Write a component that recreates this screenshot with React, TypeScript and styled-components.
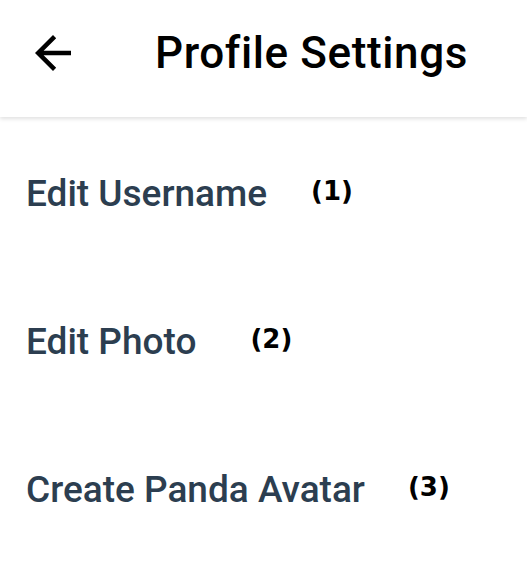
import React from "react";
import styled, { createGlobalStyle } from "styled-components";

const GlobalStyle = createGlobalStyle`
  html, body {
    margin: 0;
    padding: 0;
    background: #ffffff;
  }
  body {
    font-family: Roboto, "Noto Sans", sans-serif;
  }
`;

const Screen = styled.div`
  width: 527px;
  min-height: 582px;
  background: #ffffff;
  display: flex;
  flex-direction: column;
`;

const Header = styled.header`
  height: 117px;
  box-sizing: border-box;
  display: flex;
  align-items: center;
  padding: 0 0 12px 26px;
  box-shadow: 0 2px 4px rgba(0, 0, 0, 0.12);
  position: relative;
  z-index: 1;
`;

const BackButton = styled.button`
  width: 54px;
  height: 54px;
  padding: 0;
  border: none;
  background: none;
  display: flex;
  align-items: center;
  justify-content: center;
  color: #000;
`;

const Title = styled.h1`
  margin: 0 0 0 75px;
  font-family: Roboto, sans-serif;
  font-weight: 500;
  font-size: 44px;
  letter-spacing: 0.6px;
  color: #000;
  line-height: 1;
`;

const Menu = styled.ul`
  list-style: none;
  margin: 0;
  padding: 2px 0 0;
`;

const Row = styled.li`
  height: 148px;
  display: flex;
  align-items: center;
  padding-left: 26px;
`;

const Label = styled.span`
  font-family: Roboto, sans-serif;
  font-weight: 500;
  font-size: 37px;
  color: #2c3e50;
`;

const Badge = styled.span<{ $gap: number }>`
  margin-left: ${(p) => p.$gap}px;
  margin-bottom: 5px;
  font-family: "DejaVu Sans", sans-serif;
  font-weight: bold;
  font-size: 26px;
  color: #000;
`;

const items = [
  { label: "Edit Username", badge: "(1)", gap: 44 },
  { label: "Edit Photo", badge: "(2)", gap: 54 },
  { label: "Create Panda Avatar", badge: "(3)", gap: 43 },
];

export default function App() {
  return (
    <Screen>
      <GlobalStyle />
      <Header>
        <BackButton aria-label="Back">
          <svg width="54" height="54" viewBox="0 0 24 24" fill="currentColor">
            <path d="M20 11H7.83l5.59-5.59L12 4l-8 8 8 8 1.41-1.41L7.83 13H20v-2z" />
          </svg>
        </BackButton>
        <Title>Profile Settings</Title>
      </Header>
      <Menu>
        {items.map((it) => (
          <Row key={it.label}>
            <Label>{it.label}</Label>
            <Badge $gap={it.gap}>{it.badge}</Badge>
          </Row>
        ))}
      </Menu>
    </Screen>
  );
}
